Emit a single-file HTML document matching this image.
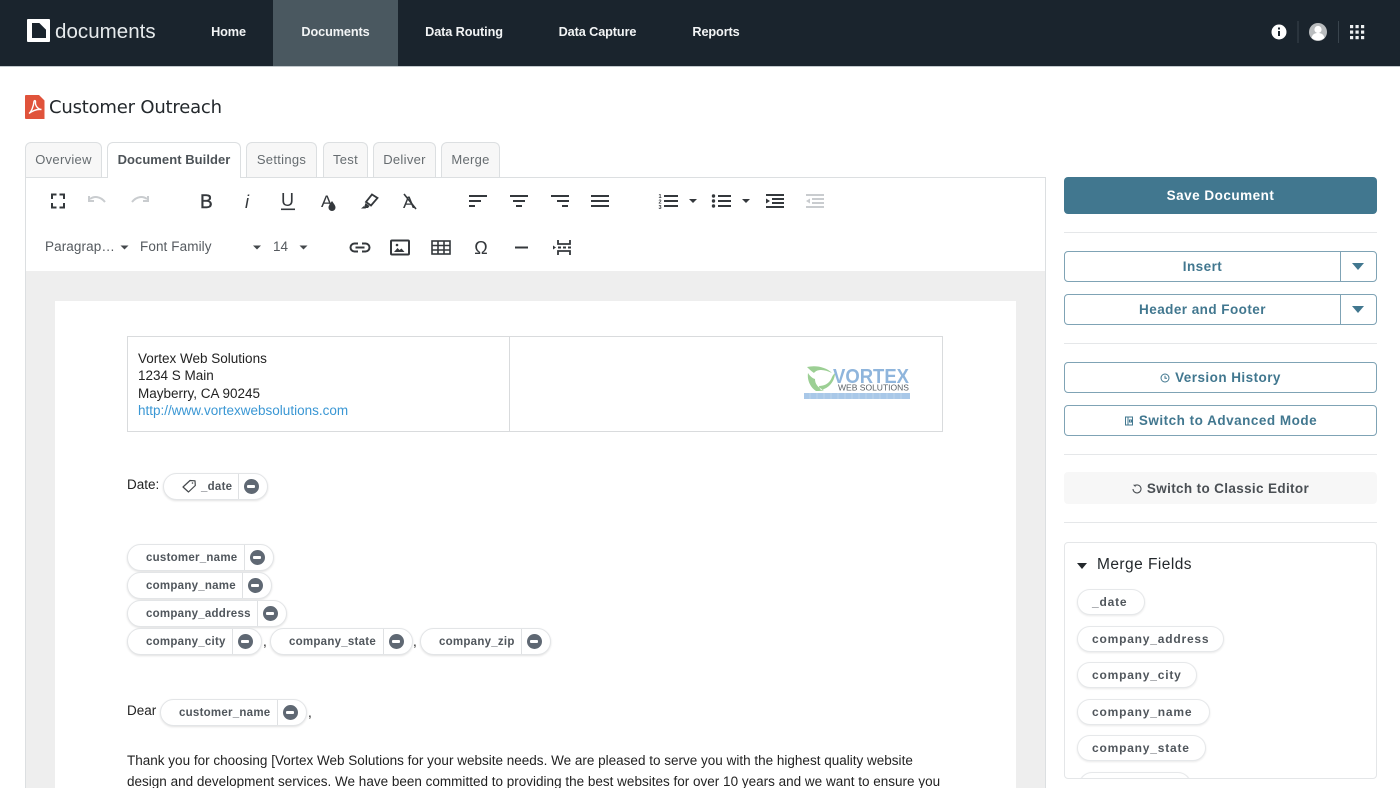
<!DOCTYPE html>
<html><head><meta charset="utf-8"><title>Customer Outreach</title>
<style>
*{box-sizing:border-box}
html,body{margin:0;padding:0;width:1400px;height:788px;overflow:hidden;background:#fff;font-family:"Liberation Sans",sans-serif}
#w{position:relative;width:1400px;height:788px;overflow:hidden}
.a{position:absolute}
.t{position:absolute;white-space:nowrap;line-height:20px;height:20px}
.nav{font-weight:700;font-size:12.7px;color:#f2f4f5;top:22px;transform:translateX(-50%);letter-spacing:-.1px}
.tab{position:absolute;top:142px;height:35px;background:#f7f7f7;border:1px solid #dcdfe1;border-bottom:0;border-radius:6px 6px 0 0;text-align:center;line-height:33px;font-size:13px;color:#666c70;letter-spacing:.3px}
.tab.on{background:#fff;height:36px;font-weight:700;color:#4d5358;letter-spacing:.05px;z-index:3}
.hr{position:absolute;left:1064px;width:313px;height:1px;background:#e5e7e9}
.btn{position:absolute;left:1064px;width:313px;height:31px;border:1px solid #7fa3b5;border-radius:4px;background:#fff;color:#41778f;font-weight:700;font-size:13.5px;line-height:30px;text-align:center;letter-spacing:.45px}
.btn.dd{padding-right:36px}
.btn.dd i{position:absolute;right:35px;top:0;bottom:0;width:1px;background:#7fa3b5}
.btn.dd b{position:absolute;right:12px;top:11px;width:0;height:0;border-left:6px solid transparent;border-right:6px solid transparent;border-top:7px solid #41778f}
.pill{position:absolute;height:27px;border:1px solid #e3e5e7;border-radius:14px;background:#fff;box-shadow:0 1px 2px rgba(0,0,0,.12);font-weight:700;font-size:11.5px;color:#50565c;line-height:27px;letter-spacing:.25px;padding-left:18px;white-space:nowrap}
.pill i{position:absolute;right:28px;top:0;bottom:0;width:1px;background:#dfe1e3}
.pill b{position:absolute;right:8.500px;top:5px;width:15px;height:15px;border-radius:50%;background:#5f6873}
.pill b:after{content:"";position:absolute;left:3.5px;top:6px;width:8px;height:3px;border-radius:1px;background:#fff}
.mp{position:absolute;left:1077px;height:26px;border:1px solid #e6e8ea;border-radius:13px;background:#fff;box-shadow:0 1px 2px rgba(0,0,0,.09);font-weight:700;font-size:12px;color:#50565c;line-height:25px;letter-spacing:.8px;padding-left:14px;white-space:nowrap}
.doc{font-size:13.5px;color:#222}
</style></head><body><div id="w">

<div class="a" style="left:0;top:0;width:1400px;height:67px;background:#1a242d;border-bottom:1px solid #c2c9cd"></div>
<div class="a" style="left:273px;top:0;width:125px;height:66px;background:#4a5860"></div>
<svg class="a" style="left:27px;top:19px" width="23" height="23" viewBox="0 0 23 23"><rect width="23" height="23" rx="1" fill="#fff"/><path d="M5 4h9l5 5v10H5z" fill="#1a242d"/><path d="M13 3.500L19.500 10" stroke="#fff" stroke-width="1.600"/></svg>
<div class="t" style="left:55px;top:21px;font-size:20.500px;line-height:22px;color:#e6eaec;letter-spacing:.05px">documents</div>
<div class="t nav" style="left:228.500px">Home</div>
<div class="t nav" style="left:335.500px">Documents</div>
<div class="t nav" style="left:464px">Data Routing</div>
<div class="t nav" style="left:597.500px">Data Capture</div>
<div class="t nav" style="left:716px">Reports</div>
<svg class="a" style="left:1265px;top:15px" width="110" height="34" viewBox="0 0 110 34">
<circle cx="14" cy="17" r="7.500" fill="#fff"/><rect x="13" y="16" width="2" height="5" fill="#1a242d"/><rect x="13" y="12.500" width="2" height="2" fill="#1a242d"/>
<rect x="32.500" y="6" width="1" height="22" fill="#39444d"/><rect x="73" y="6" width="1" height="22" fill="#39444d"/>
<circle cx="53" cy="17" r="9" fill="#b9bcbe"/><circle cx="53" cy="14.500" r="3.600" fill="#fff"/><path d="M46.500 23c1-4 3.500-5 6.500-5s5.500 1 6.500 5c-3.500 3-9.500 3-13 0z" fill="#fff"/>
<g fill="#eef1f2"><rect x="85" y="10" width="3.200" height="3.200"/><rect x="90.500" y="10" width="3.200" height="3.200"/><rect x="96" y="10" width="3.200" height="3.200"/><rect x="85" y="15.500" width="3.200" height="3.200"/><rect x="90.500" y="15.500" width="3.200" height="3.200"/><rect x="96" y="15.500" width="3.200" height="3.200"/><rect x="85" y="21" width="3.200" height="3.200"/><rect x="90.500" y="21" width="3.200" height="3.200"/><rect x="96" y="21" width="3.200" height="3.200"/></g>
</svg>

<svg class="a" style="left:25px;top:95px" width="20" height="24" viewBox="0 0 20 24"><path d="M1 0H14L19.500 5.500V24H1a1 1 0 0 1-1-1V1a1 1 0 0 1 1-1z" fill="#e0533b"/><path d="M4 18.500C6 17 8.500 12 9 6.500c.3-1.500 1.700-1 1.500.5-.4 3.500 2 7 6 7.500-4-.5-8 .5-12.500 4z" fill="none" stroke="#fff" stroke-width="1.400"/></svg>
<div class="t" style="left:49px;top:98px;font-size:18px;color:#23282c;font-family:'DejaVu Sans',sans-serif;letter-spacing:-.2px">Customer Outreach</div>

<div class="tab" style="left:25px;width:77px">Overview</div>
<div class="tab on" style="left:107px;width:134px">Document Builder</div>
<div class="tab" style="left:246px;width:71px">Settings</div>
<div class="tab" style="left:323px;width:45px">Test</div>
<div class="tab" style="left:373px;width:63px">Deliver</div>
<div class="tab" style="left:441px;width:59px">Merge</div>

<div class="a" style="left:25px;top:177px;width:1021px;height:620px;border:1px solid #dcdfe1;background:#eee"></div>
<div class="a" style="left:26px;top:178px;width:1019px;height:93px;background:#fff"></div>

<svg class="a" style="left:26px;top:178px" width="1019" height="93" viewBox="26 178 1019 93" font-family="Liberation Sans, sans-serif">
<g fill="none" stroke="#34383c" stroke-width="2">
<path d="M52 199v-4.500h4.500M59.500 194.500H64V199M64 203v4.500h-4.500M56.500 207.500H52V203"/>
</g>
<g fill="none" stroke="#c9cccf" stroke-width="2"><path d="M90 199c4-3 10-3 15 3M89 196v5h5"/><path d="M147 199c-4-3-10-3-15 3M148 196v5h-5"/></g>
<text x="200" y="208" font-size="19" fill="#34383c" stroke="#34383c" stroke-width=".4">B</text>
<text x="245" y="208" font-size="18" font-style="italic" fill="#34383c">i</text>
<text x="281" y="206" font-size="18" fill="#34383c">U</text><rect x="281" y="208.500" width="14" height="1.600" fill="#34383c"/>
<text x="321" y="207" font-size="17" fill="#34383c">A</text><path d="M332 201c2 3 3.500 4.500 3.500 6.500a3.500 3.500 0 0 1-7 0c0-2 1.500-3.500 3.500-6.500z" fill="#34383c"/>
<g fill="none" stroke="#34383c" stroke-width="1.800"><path d="M372 194.500l5.500 3.500-6.500 7.500-5-3.500z"/></g><path d="M365.500 203l4 3-1.500 2h-3l-.5-2z" fill="#34383c"/><path d="M361 208.500l3-2.500 2 2.500z" fill="#34383c"/>
<text x="403" y="208" font-size="17" fill="#34383c">A</text><path d="M404 194l12 15" stroke="#34383c" stroke-width="1.600"/>
<g fill="#34383c">
<rect x="469" y="195" width="18" height="2"/><rect x="469" y="200" width="12" height="2"/><rect x="469" y="205" width="6" height="2"/>
<rect x="510" y="195" width="18" height="2"/><rect x="513" y="200" width="12" height="2"/><rect x="516" y="205" width="6" height="2"/>
<rect x="551" y="195" width="18" height="2"/><rect x="557" y="200" width="12" height="2"/><rect x="562" y="205" width="6" height="2"/>
<rect x="591" y="195" width="18" height="2"/><rect x="591" y="200" width="18" height="2"/><rect x="591" y="205" width="18" height="2"/>
<rect x="664" y="195" width="14" height="2"/><rect x="664" y="200" width="14" height="2"/><rect x="664" y="205" width="14" height="2"/>
<text x="658.500" y="198" font-size="5.500" font-weight="700">1</text><text x="658.500" y="203.500" font-size="5.500" font-weight="700">2</text><text x="658.500" y="209" font-size="5.500" font-weight="700">3</text>
<path d="M689 199h8l-4 4z"/><path d="M742 199h8l-4 4z"/>
<circle cx="713.500" cy="196" r="1.700"/><circle cx="713.500" cy="201" r="1.700"/><circle cx="713.500" cy="206" r="1.700"/>
<rect x="718" y="195" width="13" height="2"/><rect x="718" y="200" width="13" height="2"/><rect x="718" y="205" width="13" height="2"/>
<rect x="766" y="194" width="18" height="2"/><rect x="772" y="198" width="12" height="2"/><rect x="772" y="202" width="12" height="2"/><rect x="766" y="206" width="18" height="2"/><path d="M766 198.500l4 2.500-4 2.500z"/>
</g>
<g fill="#c9cccf"><rect x="806" y="194" width="18" height="2"/><rect x="812" y="198" width="12" height="2"/><rect x="812" y="202" width="12" height="2"/><rect x="806" y="206" width="18" height="2"/><path d="M810 198.500l-4 2.500 4 2.500z"/></g>

<text x="45" y="251" font-size="13.500" fill="#555a5f" letter-spacing=".1">Paragrap…</text>
<text x="140" y="251" font-size="13.500" fill="#555a5f" letter-spacing=".1">Font Family</text>
<text x="273" y="251" font-size="13.500" fill="#555a5f">14</text>
<g fill="#44484c"><path d="M120.500 245.500h8l-4 4z"/><path d="M253 245.500h8l-4 4z"/><path d="M299.500 245.500h8l-4 4z"/></g>
<g fill="none" stroke="#34383c" stroke-width="2">
<path d="M358 243.500h-3.500a4 4 0 0 0 0 8h3.500M362 243.500h3.500a4 4 0 0 1 0 8h-3.500M355.500 247.500h9"/>
<rect x="391" y="240.500" width="18" height="14" rx="1"/>
</g>
<path d="M394 252l3.500-4 2 2 2-1.500 3 3.500z" fill="#34383c"/><circle cx="397" cy="245" r="1.300" fill="#34383c"/>
<g fill="none" stroke="#34383c" stroke-width="1.600"><rect x="432" y="241" width="18" height="13"/><path d="M432 245.500h18M432 250h18M438 241v13M444 241v13"/></g>
<text x="481" y="254" font-size="18" fill="#34383c" text-anchor="middle">Ω</text>
<rect x="515" y="246.500" width="13" height="2" fill="#34383c"/>
<g fill="none" stroke="#34383c" stroke-width="1.800"><path d="M558 240v4h12v-4M558 255v-4h12v4"/></g>
<g fill="#34383c"><path d="M553 245.500l3 2-3 2z"/><rect x="558" y="246.500" width="3" height="2"/><rect x="563" y="246.500" width="3" height="2"/><rect x="568" y="246.500" width="3" height="2"/></g>
</svg>

<div class="a" style="left:55px;top:301px;width:961px;height:490px;background:#fff"></div>
<div class="a" style="left:127px;top:336px;width:816px;height:96px;border:1px solid #d9dbdd"></div>
<div class="a" style="left:509px;top:336px;width:1px;height:96px;background:#d9dbdd"></div>
<div class="t doc" style="left:138px;top:349px">Vortex Web Solutions</div>
<div class="t doc" style="left:138px;top:366px">1234 S Main</div>
<div class="t doc" style="left:138px;top:384px">Mayberry, CA 90245</div>
<div class="t doc" style="left:138px;top:401px;color:#3a97d4">http://www.vortexwebsolutions.com</div>

<svg class="a" style="left:800px;top:360px" width="115" height="42" viewBox="0 0 115 42" font-family="Liberation Sans, sans-serif">
<path d="M7 7c9-2 19 0 25 6-8-4-15-4-18 0-3-2-5-4-7-6zM8 13c-1 7 2 14 8 18 3 0 6 0 8-1-6-2-9-6-9-11-3-1-5-3-7-6zM19 26c6 0 11-3 13-9 1-2 2-3 3-4 0 7-5 15-14 17-1-1-2-3-2-4z" fill="#9ccf94"/>
<text x="33" y="23" font-size="20.500" font-weight="700" fill="#8fb5dc" textLength="76" lengthAdjust="spacingAndGlyphs">VORTEX</text>
<text x="38" y="30.500" font-size="8" fill="#5a6066" textLength="71" lengthAdjust="spacingAndGlyphs">WEB SOLUTIONS</text>
<rect x="4" y="33" width="106" height="6" fill="#a9c8e8"/>
<path d="M10 33v6M17 33v6M24 33v6M31 33v6M38 33v6M45 33v6M52 33v6M59 33v6M66 33v6M73 33v6M80 33v6M87 33v6M94 33v6M101 33v6" stroke="#c4d9ef" stroke-width=".7"/>
</svg>

<div class="t doc" style="left:127px;top:475px">Date:</div>
<div class="pill" style="left:163px;top:473px;width:105px;padding-left:37px">_date<i></i><b></b></div>
<svg class="a" style="left:181px;top:478px" width="16" height="16" viewBox="0 0 16 16"><path d="M2 9L9 2.500l5 .3.300 4.700L7.500 14z" fill="none" stroke="#44484c" stroke-width="1.200" stroke-linejoin="round"/><circle cx="11.500" cy="5" r=".8" fill="#44484c"/></svg>

<div class="pill" style="left:127px;top:544px;width:147px">customer_name<i></i><b></b></div>
<div class="pill" style="left:127px;top:572px;width:145px">company_name<i></i><b></b></div>
<div class="pill" style="left:127px;top:600px;width:160px">company_address<i></i><b></b></div>
<div class="pill" style="left:127px;top:628px;width:135px">company_city<i></i><b></b></div>
<div class="t doc" style="left:263px;top:632px">,</div>
<div class="pill" style="left:270px;top:628px;width:143px">company_state<i></i><b></b></div>
<div class="t doc" style="left:413px;top:632px">,</div>
<div class="pill" style="left:420px;top:628px;width:131px">company_zip<i></i><b></b></div>

<div class="t doc" style="left:127px;top:701px">Dear</div>
<div class="pill" style="left:160px;top:699px;width:147px">customer_name<i></i><b></b></div>
<div class="t doc" style="left:308px;top:703px">,</div>

<div class="t doc" style="left:127px;top:751px;letter-spacing:.005px">Thank you for choosing [Vortex Web Solutions for your website needs. We are pleased to serve you with the highest quality website</div>
<div class="t doc" style="left:127px;top:772px;letter-spacing:.005px">design and development services. We have been committed to providing the best websites for over 10 years and we want to ensure you</div>

<div class="a" style="left:1064px;top:177px;width:313px;height:37px;background:#41778f;border-radius:4px;color:#fff;font-weight:700;font-size:13.500px;line-height:38px;text-align:center;letter-spacing:.5px">Save Document</div>
<div class="hr" style="top:232px"></div>
<div class="btn dd" style="top:251px">Insert<i></i><b></b></div>
<div class="btn dd" style="top:294px">Header and Footer<i></i><b></b></div>
<div class="hr" style="top:343px"></div>
<div class="btn" style="top:362px"><svg width="10" height="10" viewBox="0 0 10 10" style="margin-right:5px;vertical-align:-1px"><circle cx="5" cy="5" r="4" fill="none" stroke="#41778f" stroke-width="1"/><path d="M5 2.800V5.200H7" fill="none" stroke="#41778f"/></svg>Version History</div>
<div class="btn" style="top:405px;letter-spacing:.5px"><svg width="10" height="10" viewBox="0 0 10 10" style="margin-right:5px;vertical-align:-1px"><path d="M1.500 1h7v8h-7zM4 1v8M5.500 4h2v2h-2z" fill="none" stroke="#41778f" stroke-width="1"/></svg>Switch to Advanced Mode</div>
<div class="hr" style="top:454px"></div>
<div class="a" style="left:1064px;top:472px;width:313px;height:32px;background:#f7f7f7;border-radius:4px;color:#4a4f54;font-weight:700;font-size:13.500px;line-height:33px;text-align:center;letter-spacing:.35px"><svg width="10" height="10" viewBox="0 0 10 10" style="margin-right:5px;vertical-align:-1px"><path d="M2.500 1.800A4 4 0 1 1 1 5" fill="none" stroke="#4a4f54" stroke-width="1.100"/><path d="M1 .8h2.500v2.500z" fill="#4a4f54"/></svg>Switch to Classic Editor</div>
<div class="hr" style="top:522px"></div>

<div class="a" style="left:1064px;top:542px;width:313px;height:237px;border:1px solid #e4e6e8;border-radius:4px;overflow:hidden;background:#fff">
<div class="a" style="left:12px;top:20px;width:0;height:0;border-left:5px solid transparent;border-right:5px solid transparent;border-top:6px solid #23282c"></div>
<div class="t" style="left:32px;top:12px;font-size:15.500px;color:#23282c;letter-spacing:.45px">Merge Fields</div>
<div class="mp" style="left:14px;top:229px;width:112px"></div>
</div>
<div class="mp" style="top:589px;width:68px">_date</div>
<div class="mp" style="top:626px;width:147px">company_address</div>
<div class="mp" style="top:662px;width:120px">company_city</div>
<div class="mp" style="top:699px;width:133px">company_name</div>
<div class="mp" style="top:735px;width:129px">company_state</div>
</div></body></html>
